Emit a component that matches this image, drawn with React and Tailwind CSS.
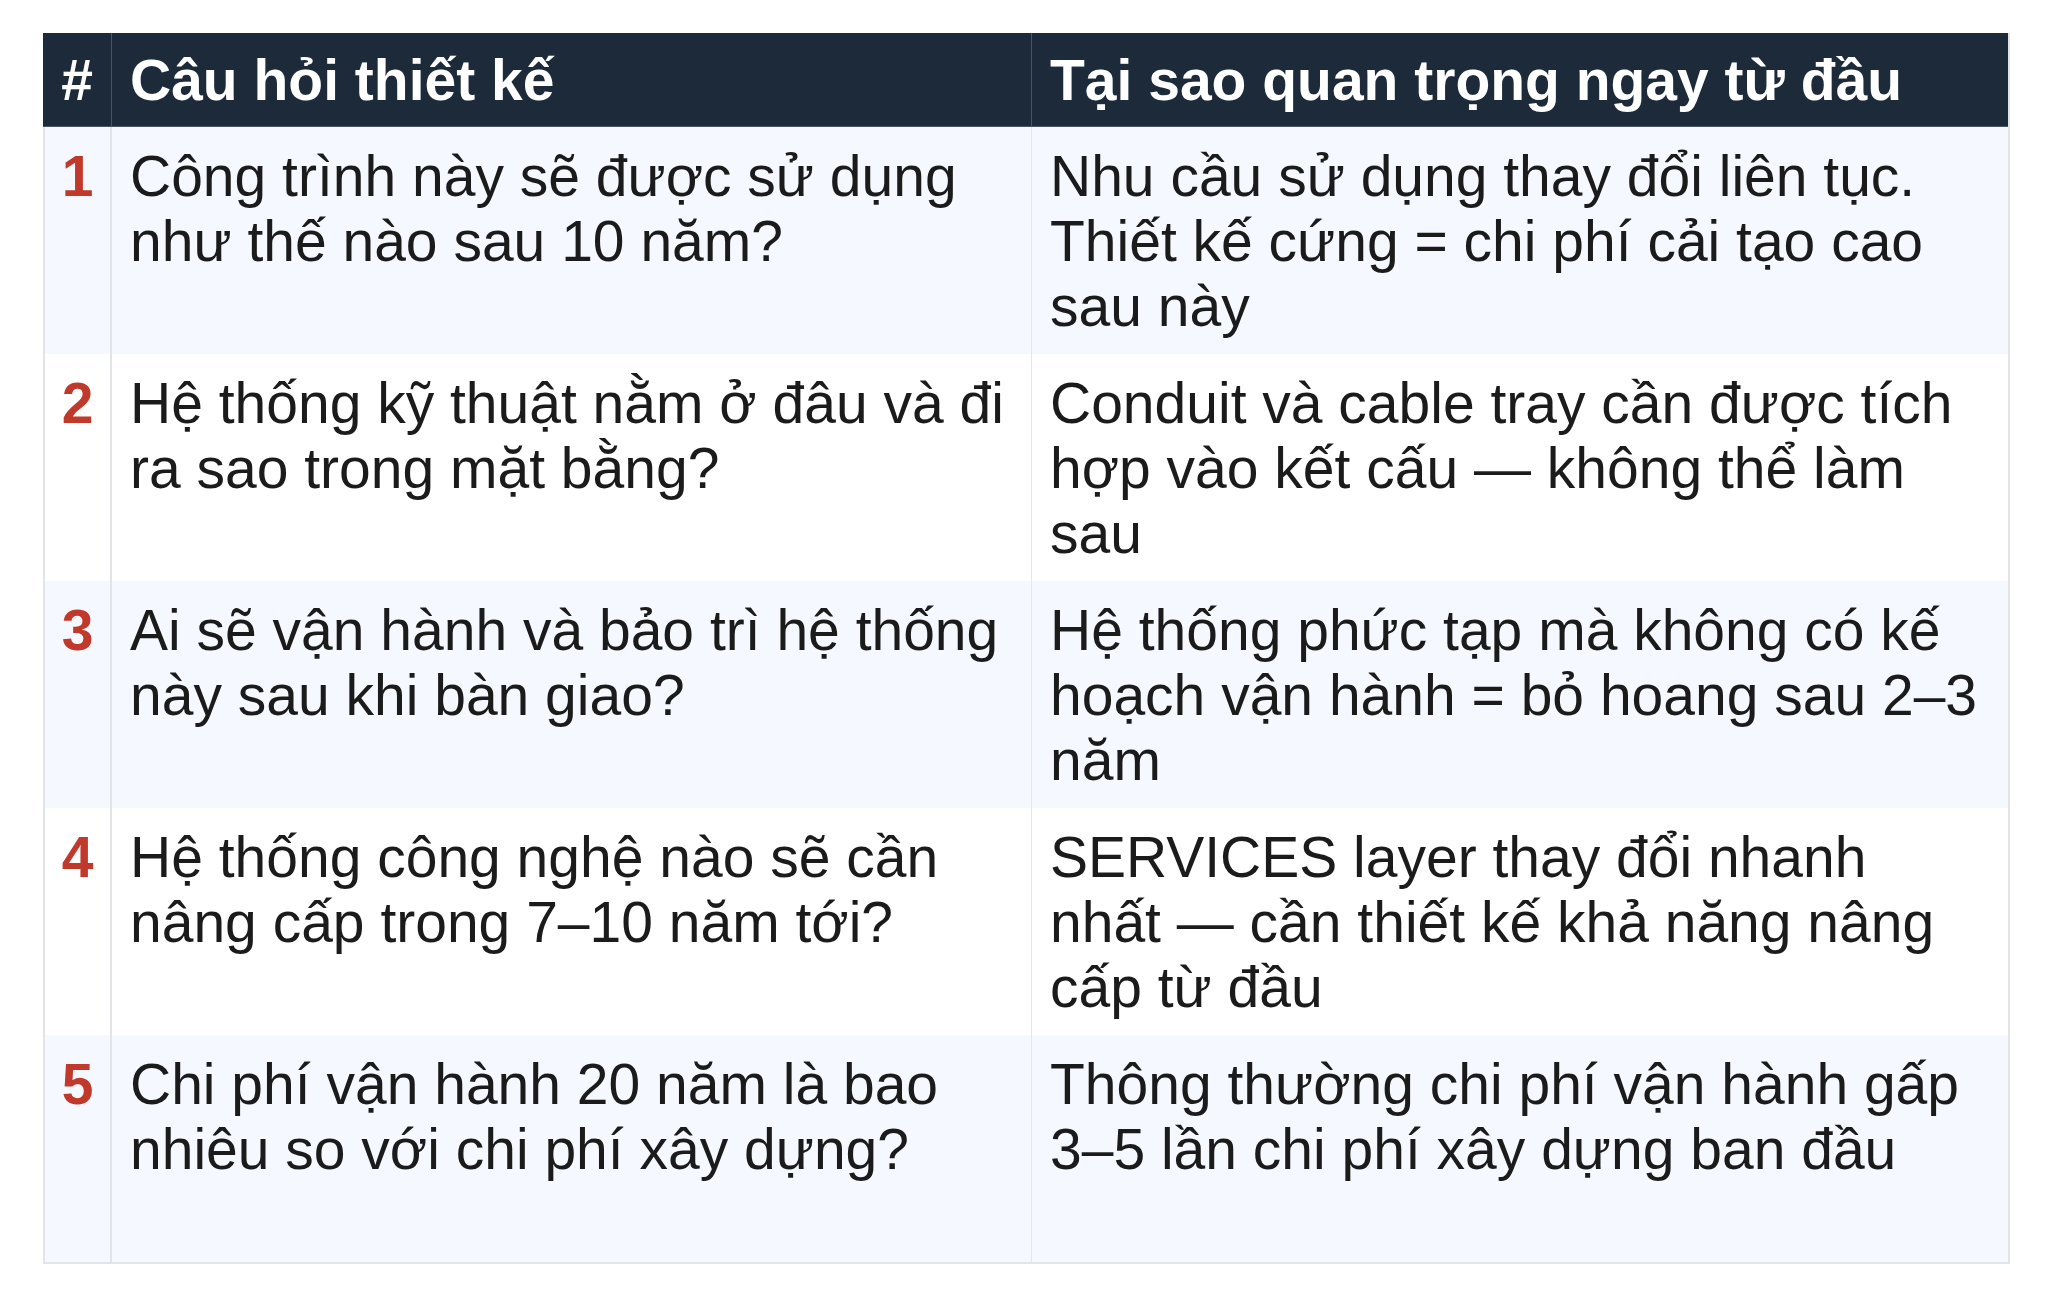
const rows = [
  {
    n: "1",
    q: "Công trình này sẽ được sử dụng như thế nào sau 10 năm?",
    a: "Nhu cầu sử dụng thay đổi liên tục. Thiết kế cứng = chi phí cải tạo cao sau này",
  },
  {
    n: "2",
    q: "Hệ thống kỹ thuật nằm ở đâu và đi ra sao trong mặt bằng?",
    a: "Conduit và cable tray cần được tích hợp vào kết cấu — không thể làm sau",
  },
  {
    n: "3",
    q: "Ai sẽ vận hành và bảo trì hệ thống này sau khi bàn giao?",
    a: "Hệ thống phức tạp mà không có kế hoạch vận hành = bỏ hoang sau 2–3 năm",
  },
  {
    n: "4",
    q: "Hệ thống công nghệ nào sẽ cần nâng cấp trong 7–10 năm tới?",
    a: "SERVICES layer thay đổi nhanh nhất — cần thiết kế khả năng nâng cấp từ đầu",
  },
  {
    n: "5",
    q: "Chi phí vận hành 20 năm là bao nhiêu so với chi phí xây dựng?",
    a: "Thông thường chi phí vận hành gấp 3–5 lần chi phí xây dựng ban đầu",
  },
];

export default function App() {
  return (
    <div
      className="w-[2048px] h-[1299px] bg-white pt-[33px] pl-[43px]"
      style={{ fontFamily: '"Liberation Sans", Arial, sans-serif' }}
    >
      <div className="w-[1967px] border-r-2 border-b-2 border-[#e3e4e8]">
        <div className="grid grid-cols-[69px_920px_976px] h-[94px] bg-[#1c2a3a] border-b border-[#4a5666] text-white font-bold text-[57px] leading-[65px]">
          <div className="flex justify-center pt-[15px] border-r border-[#4a5666]">#</div>
          <div className="pl-[18px] pt-[15px] border-r border-[#4a5666]">Câu hỏi thiết kế</div>
          <div className="pl-[18px] pt-[15px]">Tại sao quan trọng ngay từ đầu</div>
        </div>
        {rows.map((r, i) => (
          <div
            key={r.n}
            className={`grid grid-cols-[69px_920px_976px] h-[227px] text-[57px] leading-[65px] text-[#1b1b1b] ${
              i % 2 === 0 ? "bg-[#f5f8fe]" : "bg-white"
            }`}
          >
            <div className="flex justify-center pt-[17px] border-l-2 border-r-2 border-[#e3e4e8] font-bold text-[#c0392b]">
              {r.n}
            </div>
            <div className="pl-[18px] pr-[6px] pt-[17px] border-r border-[#e3e6ea]">{r.q}</div>
            <div className="pl-[18px] pr-[20px] pt-[17px]">{r.a}</div>
          </div>
        ))}
      </div>
    </div>
  );
}
